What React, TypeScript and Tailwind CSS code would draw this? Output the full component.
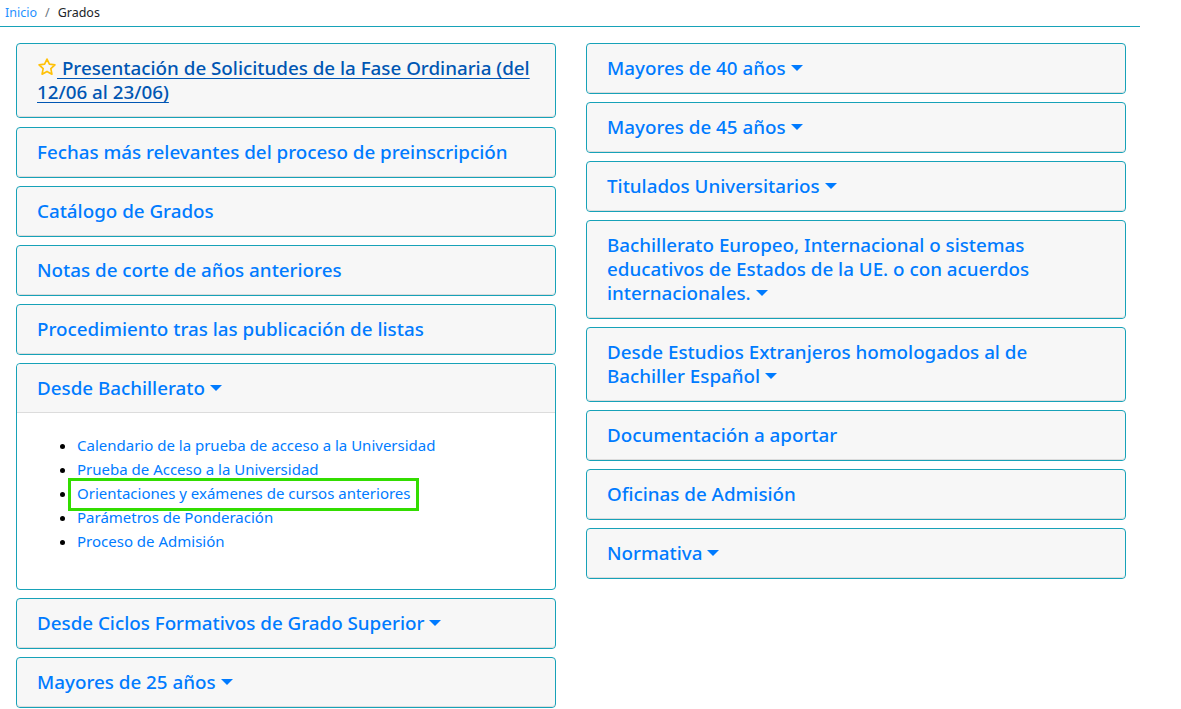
import React from "react";

const font = { fontFamily: '"Noto Sans", "Open Sans", sans-serif' };

function Caret() {
  return <span className="ml-[5px] inline-block h-0 w-0 border-x-[6px] border-t-[6px] border-x-transparent border-t-[#007bff] align-[4px]" />;
}

function Card({ title, caret = true }: { title: string; caret?: boolean }) {
  return (
    <div className="mb-2 rounded border border-[#17a2b8] bg-[#f7f7f7]">
      <div className="border-b border-[#dcdcdc] rounded px-5 py-3 text-[18.8px] font-medium leading-6 text-[#007bff]">
        {title}
        {caret && <Caret />}
      </div>
    </div>
  );
}

const bachItems = [
  "Calendario de la prueba de acceso a la Universidad",
  "Prueba de Acceso a la Universidad",
  "Orientaciones y exámenes de cursos anteriores",
  "Parámetros de Ponderación",
  "Proceso de Admisión",
];

function Star() {
  return (
    <svg width="20" height="20" viewBox="0 0 24 24" className="inline-block align-[-2px]" fill="none" stroke="#ffc107" strokeWidth="2" strokeLinejoin="round">
      <path d="M12 2.5l2.9 6.1 6.6.8-4.9 4.6 1.3 6.6L12 17.3l-5.9 3.3 1.3-6.6-4.9-4.6 6.6-.8z" />
    </svg>
  );
}

export default function App() {
  return (
    <div className="min-h-[709px] bg-white text-[#212529]" style={font}>
      <div className="w-[1140px]">
        <div className="flex items-center border-b border-[#17a2b8] px-[5px] pt-[5px] pb-[5px] text-[12.5px] leading-4">
          <a className="text-[#1e90ff]">Inicio</a>
          <span className="px-2 text-[#6c757d]">/</span>
          <span>Grados</span>
        </div>
        <div className="grid grid-cols-[540px_540px] gap-[30px] pl-4 pt-4">
          <div>
            <div className="mb-[9px] rounded border border-[#17a2b8] bg-[#f7f7f7]">
              <div className="border-b border-[#dcdcdc] rounded px-5 py-3 text-[18.8px] font-medium leading-6 text-[#0056b3] underline underline-offset-[3px]">
                <Star /> Presentación de Solicitudes de la Fase Ordinaria (del 12/06 al 23/06)
              </div>
            </div>
            <Card title="Fechas más relevantes del proceso de preinscripción" caret={false} />
            <Card title="Catálogo de Grados" caret={false} />
            <Card title="Notas de corte de años anteriores" caret={false} />
            <Card title="Procedimiento tras las publicación de listas" caret={false} />
            <div className="mb-2 rounded border border-[#17a2b8] bg-white">
              <div className="rounded-t border-b border-[#dcdcdc] bg-[#f7f7f7] px-5 py-3 text-[18.8px] font-medium leading-6 text-[#007bff]">
                Desde Bachillerato
                <Caret />
              </div>
              <div className="p-5">
                <ul className="mb-4 list-disc pl-10 text-[15px] leading-6 text-[#007bff]">
                  {bachItems.map((t, i) => (
                    <li key={t} className="marker:text-black">
                      {i === 2 ? (
                        <span className="relative">
                          {t}
                          <span className="pointer-events-none absolute -left-[9px] -right-[8px] -top-[5px] -bottom-[8px] border-[3px] border-[#33dd00]" />
                        </span>
                      ) : (
                        t
                      )}
                    </li>
                  ))}
                </ul>
              </div>
            </div>
            <Card title="Desde Ciclos Formativos de Grado Superior" />
            <Card title="Mayores de 25 años" />
          </div>
          <div>
            <Card title="Mayores de 40 años" />
            <Card title="Mayores de 45 años" />
            <Card title="Titulados Universitarios" />
            <Card title="Bachillerato Europeo, Internacional o sistemas educativos de Estados de la UE. o con acuerdos internacionales." />
            <Card title="Desde Estudios Extranjeros homologados al de Bachiller Español" />
            <Card title="Documentación a aportar" caret={false} />
            <Card title="Oficinas de Admisión" caret={false} />
            <Card title="Normativa" />
          </div>
        </div>
      </div>
    </div>
  );
}
